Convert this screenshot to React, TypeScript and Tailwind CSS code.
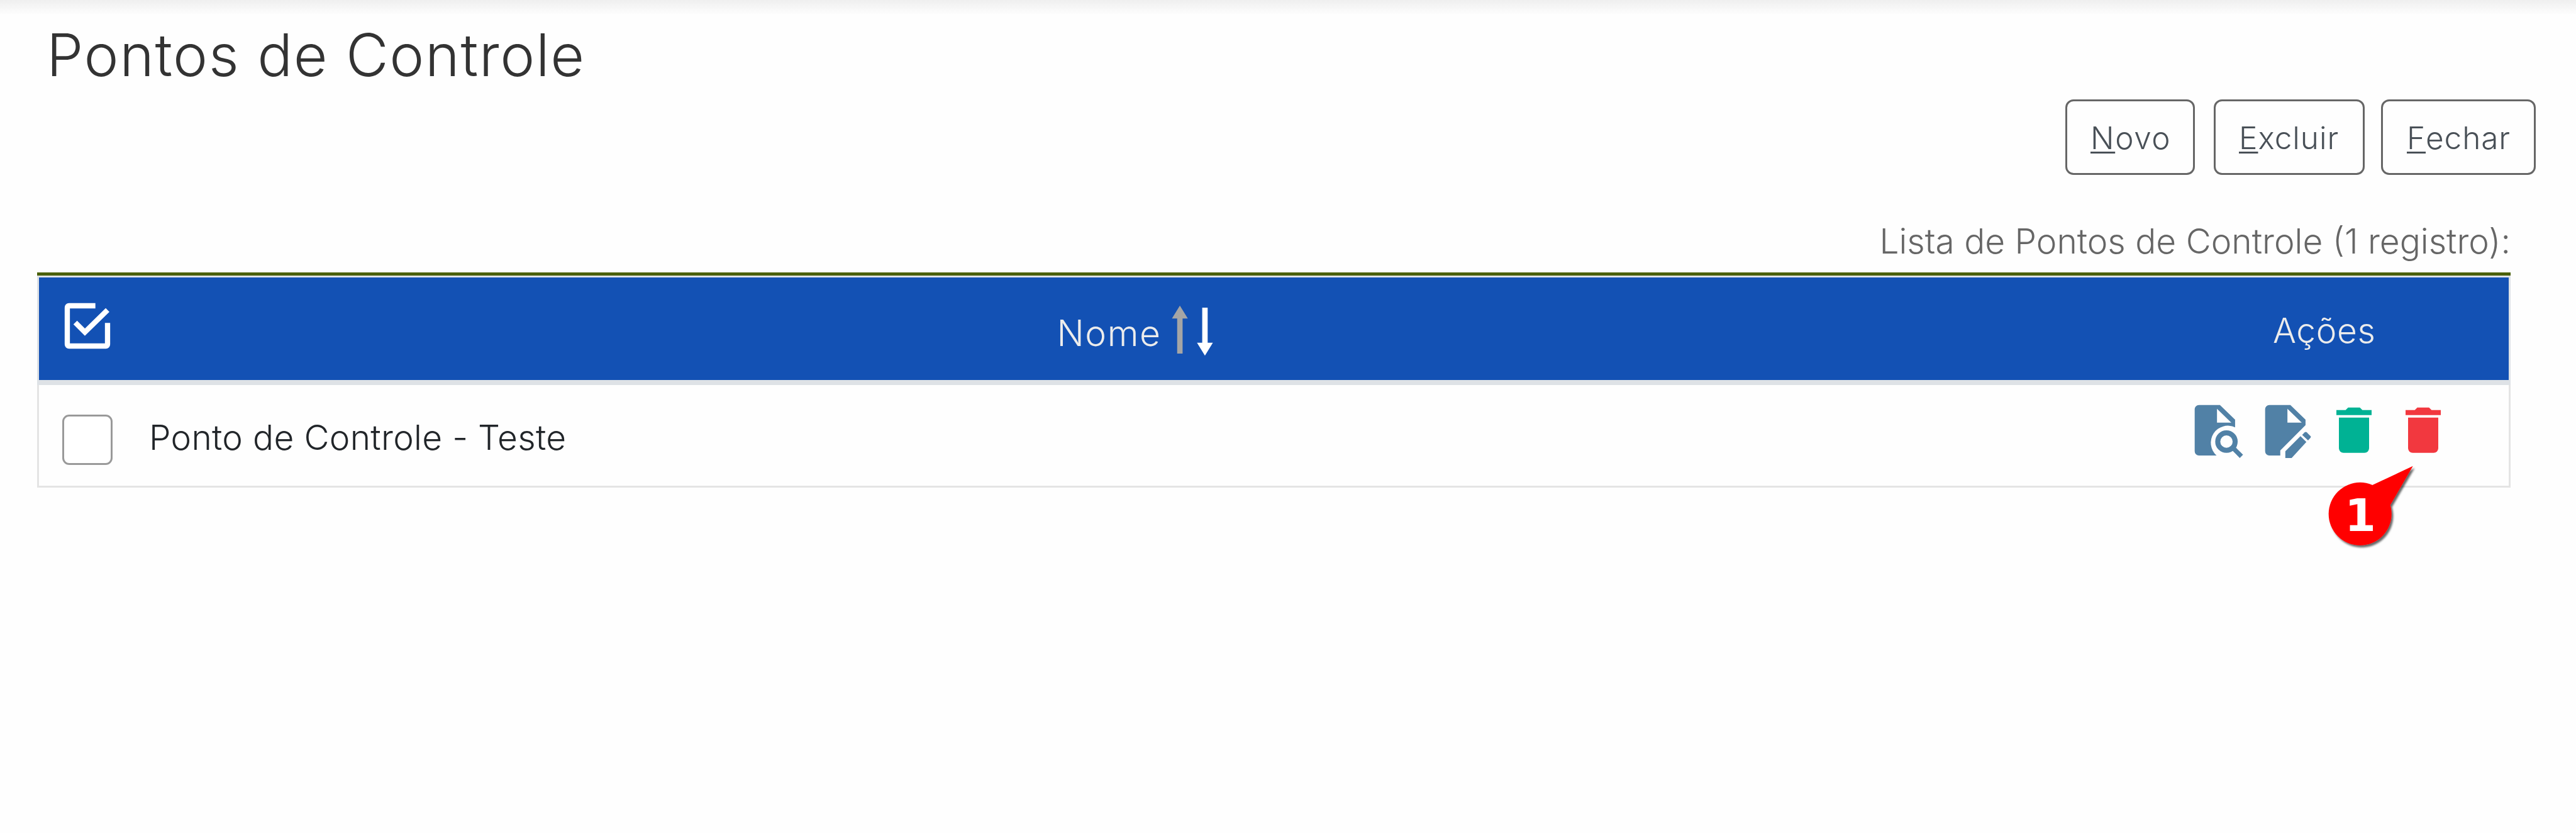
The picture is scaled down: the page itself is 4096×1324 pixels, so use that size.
import React from "react";

function SelectAllIcon() {
  return (
    <svg viewBox="0 0 120 120" className="h-[80px] w-[80px]" fill="none" stroke="#fff" strokeWidth="12.5" strokeLinejoin="round">
      <path d="M79 12H16a4 4 0 0 0-4 4V104a4 4 0 0 0 4 4H104a4 4 0 0 0 4-4V53" />
      <path d="M31 52 54 75 108 22" strokeLinejoin="miter" />
    </svg>
  );
}

function SortArrows() {
  return (
    <svg viewBox="0 0 108 128" className="h-[85px] w-[72px]">
      <path d="M24 4 43 35H30.500V119H17.500V35H5Z" fill="#a5a5a5" />
      <path d="M84 124 103 93H90.500V9H77.500V93H65Z" fill="#fff" />
    </svg>
  );
}

function FileSearchIcon() {
  return (
    <svg viewBox="0 0 124 136" className="h-[91px] w-[83px]" fill="#5181a6">
      <path
        fillRule="evenodd"
        d="M14 4H64L100 39V57A40.500 40.500 0 0 0 56 124H14A10 10 0 0 1 4 114V14A10 10 0 0 1 14 4ZM57 13V46H91Z"
      />
      <circle cx="79.500" cy="91" r="20.700" fill="none" stroke="#5181a6" strokeWidth="12" />
      <path d="M95 106 115 126" stroke="#5181a6" strokeWidth="11" />
    </svg>
  );
}

function FileEditIcon() {
  return (
    <svg viewBox="0 0 124 136" className="h-[91px] w-[83px]" fill="#5181a6">
      <path
        fillRule="evenodd"
        d="M14 4H64L100 39V52L40 112V124H14A10 10 0 0 1 4 114V14A10 10 0 0 1 14 4ZM57 13V46H91Z"
      />
      <path d="M52 114 88 78 102 92 67 130H52Z" />
      <path d="M92 75 98 69Q101 67 103 69L112 78Q113 80 112 82L106 88Z" />
    </svg>
  );
}

function TrashIcon({ color }: { color: string }) {
  return (
    <svg viewBox="0 0 96 136" className="h-[91px] w-[64px]" fill={color}>
      <path d="M6 16H28L34 10H62L68 16H90V28H6Z" />
      <path d="M12 34H84V107A11 11 0 0 1 73 118H23A11 11 0 0 1 12 107Z" />
    </svg>
  );
}

function Callout() {
  return (
    <svg viewBox="0 0 240 220" className="absolute left-[3698px] top-[734px] h-[147px] w-[160px] overflow-visible">
      <defs>
        <filter id="calloutShadow" x="-20%" y="-20%" width="150%" height="150%">
          <feDropShadow dx="4" dy="5" stdDeviation="2" floodColor="#000" floodOpacity="0.6" />
        </filter>
      </defs>
      <g fill="#f00" filter="url(#calloutShadow)">
        <path d="M82 124 112 55 208 10 154 103Z" />
        <circle cx="82" cy="124" r="75" />
      </g>
      <text x="82.500" y="165" textAnchor="middle" fill="#fff" fontSize="107" className="font-['DejaVu_Sans'] font-bold">
        1
      </text>
    </svg>
  );
}

function ToolbarButton({ label, className }: { label: string; className: string }) {
  return (
    <button
      className={`flex h-[120px] items-start rounded-[13px] border-[3px] border-[#666] pt-[32px] text-left text-[49.5px] leading-[52px] text-[#495057] ${className}`}
    >
      <span className="underline decoration-[3px] underline-offset-[4px]">{label[0]}</span>
      <span>{label.slice(1)}</span>
    </button>
  );
}

export default function App() {
  return (
    <div className="relative h-[1324px] w-[4096px] overflow-hidden bg-[#fefefe] font-['Inter',sans-serif] font-light">
      <div className="h-[24px] bg-linear-to-b from-[#efefef] to-[#fefefe]" />
      <h1 className="mt-[13px] pl-[74px] text-[93px] leading-[100px] tracking-[1.6px] text-[#333]">Pontos de Controle</h1>

      <div className="mt-[21px] flex justify-end pr-[64px]">
        <ToolbarButton label="Novo" className="mr-[30px] w-[206px] pl-[37px] tracking-[1.6px]" />
        <ToolbarButton label="Excluir" className="mr-[26px] w-[240px] pl-[37px] tracking-[1px]" />
        <ToolbarButton label="Fechar" className="w-[246px] pl-[38px] tracking-[0.9px]" />
      </div>

      <div className="ml-[59px] mt-[75px] w-[3933px]">
        <div className="flex h-[80px] justify-end text-[55px] leading-[60px] text-[#666]">
          <span>Lista de Pontos de Controle (1 registro):</span>
        </div>
        <div className="h-[5px] bg-[#4a6006]" />
        <div className="border-x-[3px] border-t-[3px] border-[#dee2e6]">
          <div className="flex h-[163px] items-start bg-[#1351b4] text-[55px] leading-[60px] text-[#ececec]">
            <div className="w-[174px] pl-[37px] pt-[37px]">
              <SelectAllIcon />
            </div>
            <div className="flex flex-1 items-start justify-center">
              <span className="mr-[13px] mt-[59px] text-[57px] tracking-[1.6px]">Nome</span>
              <div className="mt-[42px]">
                <SortArrows />
              </div>
            </div>
            <div className="w-[613px] pl-[238px] pt-[54px] tracking-[0.6px]">Ações</div>
          </div>
        </div>
        <div className="h-[8px] bg-[#dee2e6]" />
        <div className="flex h-[163px] items-start border-x-[3px] border-b-[3px] border-[#e4e4e4]">
          <div className="w-[175px] pl-[37px] pt-[47px]">
            <div className="h-[80px] w-[80px] rounded-[11px] border-[3px] border-[#999] bg-white" />
          </div>
          <div className="flex-1 pt-[53px] text-[55px] leading-[60px] tracking-[0.3px] text-[#212529]">
            Ponto de Controle - Teste
          </div>
          <div className="flex w-[502px] pt-[29px]">
            <FileSearchIcon />
            <div className="ml-[29px]">
              <FileEditIcon />
            </div>
            <div className="ml-[29px]">
              <TrashIcon color="#00b294" />
            </div>
            <div className="ml-[46px]">
              <TrashIcon color="#f2383f" />
            </div>
          </div>
        </div>
      </div>
      <Callout />
    </div>
  );
}
